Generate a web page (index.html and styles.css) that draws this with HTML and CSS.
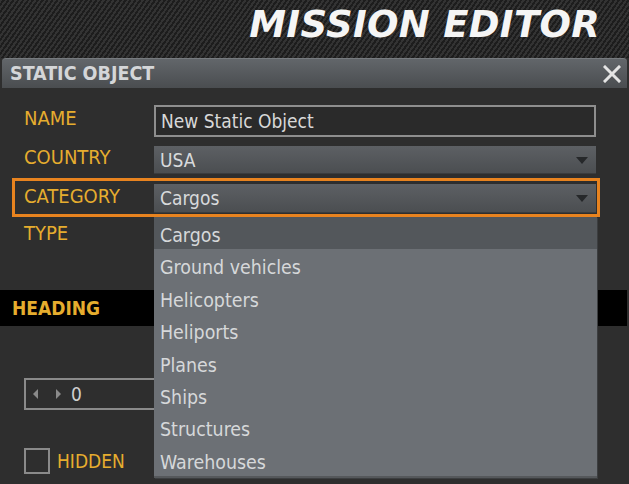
FILE: index.html
```html
<!DOCTYPE html>
<html>
<head>
<meta charset="utf-8">
<link rel="stylesheet" href="styles.css">
</head>
<body>
<div class="header"><span class="app-title">MISSION EDITOR</span></div>
<div class="panel">
  <div class="titlebar">
    <span class="panel-title">STATIC OBJECT</span>
    <svg class="close" width="18" height="18" viewBox="0 0 18 18"><path d="M2 2 L16 16 M16 2 L2 16" stroke="#e4e4e4" stroke-width="3" stroke-linecap="square"/></svg>
  </div>
  <div class="form">
    <div class="row row-name">
      <span class="label">NAME</span>
      <div class="input">New Static Object</div>
    </div>
    <div class="row row-country">
      <span class="label">COUNTRY</span>
      <div class="select">USA<span class="arrow"></span></div>
    </div>
    <div class="row row-category">
      <span class="label">CATEGORY</span>
      <div class="select">Cargos<span class="arrow"></span></div>
      <div class="dropdown">
        <div class="item active">Cargos</div>
        <div class="item">Ground vehicles</div>
        <div class="item">Helicopters</div>
        <div class="item">Heliports</div>
        <div class="item">Planes</div>
        <div class="item">Ships</div>
        <div class="item">Structures</div>
        <div class="item">Warehouses</div>
      </div>
    </div>
    <div class="row row-type">
      <span class="label">TYPE</span>
      <div class="select"><span class="arrow"></span></div>
    </div>
  </div>
  <div class="section-bar"><span class="section-title">HEADING</span></div>
  <div class="heading-body">
    <div class="spin">
      <span class="tri-left"></span>
      <span class="tri-right"></span>
      <span class="spin-value">0</span>
    </div>
    <label class="check-row">
      <span class="checkbox"></span>
      <span class="check-label">HIDDEN</span>
    </label>
  </div>
</div>
</body>
</html>
```
FILE: styles.css
```css
html, body {
  margin: 0;
  padding: 0;
}
body {
  width: 629px;
  height: 484px;
  overflow: hidden;
  background: #2e2e2e;
  font-family: "DejaVu Sans Condensed", "DejaVu Sans", sans-serif;
  font-stretch: condensed;
}
.header {
  height: 58px;
  box-sizing: border-box;
  background: repeating-linear-gradient(125deg, #333333 0px, #333333 2px, #1d1d1d 2px, #1d1d1d 4px);
  display: flex;
  justify-content: flex-end;
  align-items: flex-start;
  padding: 2px 29px 0 0;
}
.app-title {
  font-family: "DejaVu Sans", sans-serif;
  font-stretch: normal;
  font-weight: bold;
  font-style: italic;
  font-size: 37px;
  line-height: 46px;
  color: #f5f5f5;
  letter-spacing: 0.3px;
}
.panel {
  position: relative;
}
.titlebar {
  margin: 0 2px;
  height: 30px;
  box-sizing: border-box;
  border-radius: 4px 4px 0 0;
  background: linear-gradient(#62666a, #4a4d50);
  border-top: 1px solid #777b7f;
  display: flex;
  align-items: center;
  justify-content: space-between;
  padding: 0 6px 0 8px;
}
.panel-title {
  font-weight: bold;
  font-size: 19.5px;
  color: #d4d6d8;
}
.form {
  padding-top: 17px;
  display: flex;
  flex-direction: column;
}
.row {
  display: flex;
  align-items: center;
  padding-left: 24px;
}
.label {
  width: 130px;
  flex: none;
  color: #e6ad2e;
  font-size: 20px;
  line-height: 20px;
  margin-bottom: 6px;
}
.input {
  width: 442px;
  height: 32px;
  box-sizing: border-box;
  border: 2px solid #8e8e8e;
  background: #2a2a2a;
  color: #d8d8d8;
  font-size: 19px;
  padding-left: 5px;
  line-height: 28px;
}
.select {
  position: relative;
  width: 442px;
  height: 28px;
  box-sizing: border-box;
  background: linear-gradient(#5d6064, #4b4e51);
  border-bottom: 1px solid #3a3c3e;
  color: #d8dadc;
  font-size: 19px;
  padding-left: 6px;
  line-height: 28px;
}
.arrow {
  position: absolute;
  right: 8px;
  top: 11px;
  width: 0;
  height: 0;
  border-left: 6px solid transparent;
  border-right: 6px solid transparent;
  border-top: 7px solid #26282a;
}
.row-country {
  margin-top: 9px;
}
.row-category {
  position: relative;
  margin: 4px 29px 0 12px;
  border: 3px solid #e8831f;
  padding: 3px 1px 1px 9px;
}
.row-category .select {
  height: 29px;
}
.row-type {
  margin-top: 5px;
}
.dropdown {
  position: absolute;
  left: 139px;
  top: 36px;
  width: 443px;
  z-index: 5;
  background: #6c7075;
  border-bottom: 2px solid #55585b;
  box-shadow: 1px 1px 0 #3c3e40;
}
.item {
  height: 32.4px;
  box-sizing: border-box;
  padding: 2px 0 0 6px;
  line-height: 34px;
  color: #d6d8da;
  font-size: 19.4px;
}
.item.active {
  background: #53575b;
}
.section-bar {
  margin-top: 40px;
  margin-right: 2px;
  height: 36px;
  background: #000;
  display: flex;
  align-items: center;
  padding-left: 12px;
}
.section-title {
  font-weight: bold;
  font-size: 19px;
  color: #e6ad2e;
}
.heading-body {
  padding: 52px 0 0 24px;
  display: flex;
  flex-direction: column;
  gap: 38px;
}
.spin {
  width: 300px;
  height: 32px;
  box-sizing: border-box;
  border: 2px solid #8a8a8a;
  display: flex;
  align-items: center;
  padding-left: 7px;
}
.tri-left {
  width: 0;
  height: 0;
  border-top: 5px solid transparent;
  border-bottom: 5px solid transparent;
  border-right: 5px solid #8a8a8a;
}
.tri-right {
  margin-left: 18px;
  width: 0;
  height: 0;
  border-top: 5px solid transparent;
  border-bottom: 5px solid transparent;
  border-left: 5px solid #8a8a8a;
}
.spin-value {
  margin-left: 10px;
  color: #cfcfcf;
  font-size: 19px;
}
.check-row {
  display: flex;
  align-items: center;
  gap: 7px;
}
.checkbox {
  width: 26px;
  height: 26px;
  box-sizing: border-box;
  border: 2px solid #8a8a8a;
}
.check-label {
  color: #e6ad2e;
  font-size: 19px;
}
```
